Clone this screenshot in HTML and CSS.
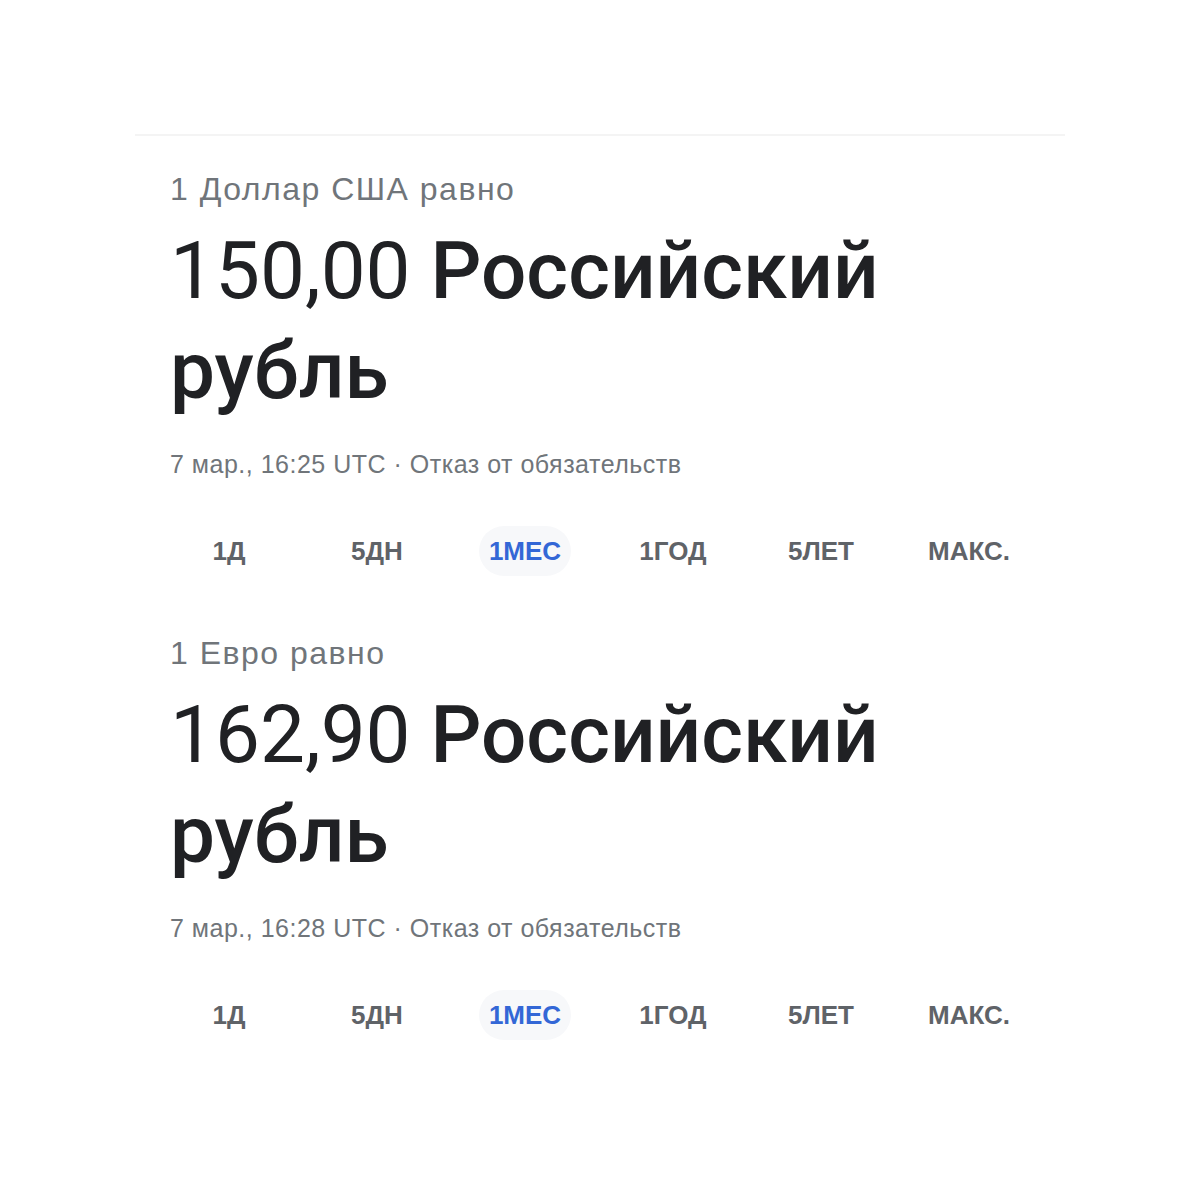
FILE: index.html
```html
<!DOCTYPE html>
<html lang="ru">
<head>
    <meta charset="UTF-8">
    <title>Курс валют</title>
    <link rel="stylesheet" href="styles.css">
</head>
<body>
    <div class="card">
        <div class="quote">
            <div class="quote-label">1 Доллар США равно</div>
            <div class="quote-value"><span class="amount">150,00</span> Российский рубль</div>
            <div class="quote-meta">7 мар., 16:25 UTC · Отказ от обязательств</div>
            <div class="ranges">
                <span class="range">1Д</span>
                <span class="range">5ДН</span>
                <span class="range active">1МЕС</span>
                <span class="range">1ГОД</span>
                <span class="range">5ЛЕТ</span>
                <span class="range">МАКС.</span>
            </div>
        </div>

        <div class="quote">
            <div class="quote-label">1 Евро равно</div>
            <div class="quote-value"><span class="amount">162,90</span> Российский рубль</div>
            <div class="quote-meta">7 мар., 16:28 UTC · Отказ от обязательств</div>
            <div class="ranges">
                <span class="range">1Д</span>
                <span class="range">5ДН</span>
                <span class="range active">1МЕС</span>
                <span class="range">1ГОД</span>
                <span class="range">5ЛЕТ</span>
                <span class="range">МАКС.</span>
            </div>
        </div>
    </div>
</body>
</html>
```

FILE: styles.css
```css
* {
    margin: 0;
    padding: 0;
    box-sizing: border-box;
}

body {
    background: #fff;
    font-family: 'Liberation Sans', Arial, sans-serif;
    color: #202124;
}

.card {
    width: 930px;
    margin: 134px auto 0;
    border-top: 2px solid #f4f4f4;
}

.quote {
    padding-left: 35px;
    margin-top: 35px;
}

.quote + .quote {
    margin-top: 59px;
}

.quote-label {
    font-size: 32px;
    line-height: 36px;
    letter-spacing: 1.5px;
    color: #70757a;
}

.quote-value {
    font-family: Roboto, 'Noto Sans', sans-serif;
    font-size: 80px;
    line-height: 100px;
    font-weight: 500;
    color: #202124;
    margin-top: 14px;
    width: 760px;
}

.quote-value .amount {
    font-weight: 400;
}

.quote-meta {
    font-size: 25px;
    line-height: 30px;
    letter-spacing: 0.5px;
    color: #70757a;
    margin-top: 28px;
}

.ranges {
    display: grid;
    grid-template-columns: repeat(6, 148px);
    margin-left: -15px;
    margin-top: 47px;
}

.range {
    justify-self: center;
    height: 50px;
    line-height: 50px;
    padding: 0 10px;
    border-radius: 25px;
    font-size: 26px;
    font-weight: bold;
    color: #5f6368;
}

.range.active {
    color: #3367d6;
    background: #f7f8fa;
}
```
